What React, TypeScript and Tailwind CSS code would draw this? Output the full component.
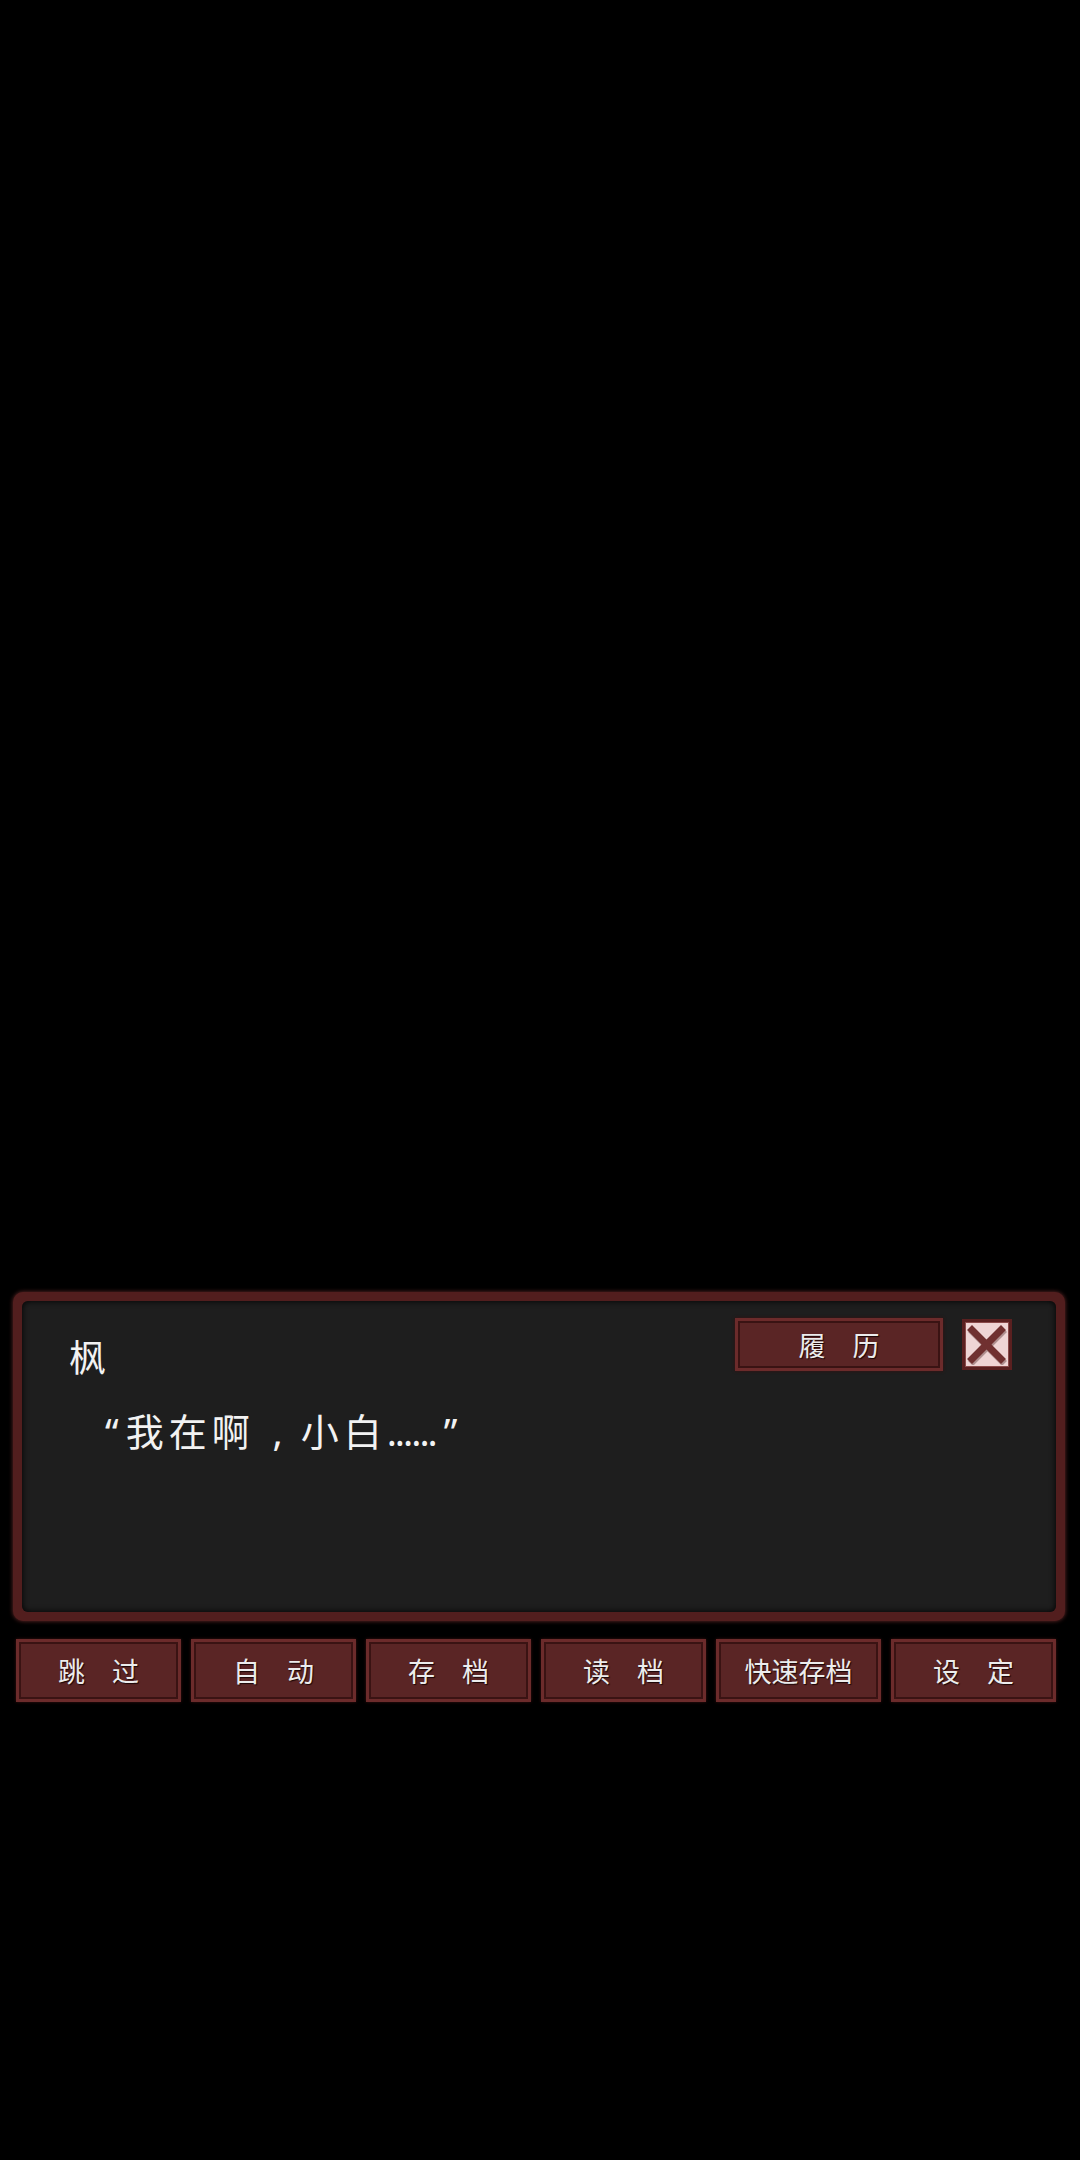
const menu = ["跳　过", "自　动", "存　档", "读　档", "快速存档", "设　定"];

const font = { fontFamily: '"Noto Sans CJK SC", "Noto Sans", sans-serif' };

const RedButton = ({ label, className }: { label: string; className: string }) => (
  <button
    className={`flex items-center justify-center border-[3px] border-[#6c2b2b] bg-[#5a2525] shadow-[inset_0_0_0_2px_#3a1313,0_0_3px_#3a1010] text-[27px] leading-none text-[#ececec] [text-shadow:1px_1px_1px_#1a0606] ${className}`}
  >
    {label}
  </button>
);

const CloseButton = () => (
  <button className="flex h-[51px] w-[50px] items-center justify-center border-[3px] border-[#5a2020] bg-[#efd5d5] shadow-[inset_0_0_0_1px_#8a4a4a]">
    <svg width="40" height="40" viewBox="0 0 40 40">
      <g stroke="#3a1010" strokeWidth="7" strokeLinecap="square" opacity="0.35">
        <line x1="6" y1="7" x2="35" y2="36" />
        <line x1="35" y1="7" x2="6" y2="36" />
      </g>
      <g stroke="#703030" strokeWidth="7" strokeLinecap="square">
        <line x1="5" y1="5" x2="34" y2="34" />
        <line x1="34" y1="5" x2="5" y2="34" />
      </g>
    </svg>
  </button>
);

export default function App() {
  return (
    <div className="flex min-h-[2160px] w-full flex-col bg-black" style={font}>
      {/* dialog box */}
      <div className="mx-[13px] mt-[1292px] h-[329px] w-[1052px] rounded-[10px] bg-[#521e1e] p-[9px] shadow-[0_0_4px_#6a2a2a]">
        <div className="flex h-full flex-col rounded-[6px] bg-[#1e1e1e] shadow-[inset_0_0_6px_#000]">
          <div className="flex items-start justify-between pl-[47px] pr-[44px] pt-[17px]">
            <div className="mt-[20px] text-[37px] leading-none text-[#f2f2f2]">枫</div>
            <div className="flex items-center gap-[19px]">
              <RedButton label="履　历" className="h-[53px] w-[208px]" />
              <CloseButton />
            </div>
          </div>
          <p className="ml-[83px] mt-[36px] text-[38px] leading-none tracking-[5px] text-[#f2f2f2]">
            <span className="tracking-[7px] [font-family:'Noto_Sans',sans-serif]">“</span>
            我在啊
            <span className="inline-block w-[46px] text-center tracking-normal [font-family:'Noto_Sans',sans-serif]">,</span>
            小白
            <span className="tracking-[-2px] [font-family:'Noto_Sans',sans-serif]">......</span>
            <span className="ml-[8px] [font-family:'Noto_Sans',sans-serif]">”</span>
          </p>
        </div>
      </div>

      {/* menu row */}
      <div className="mt-[18px] flex gap-[10px] px-[16px]">
        {menu.map((m) => (
          <RedButton key={m} label={m} className="h-[63px] w-[165px]" />
        ))}
      </div>
    </div>
  );
}
